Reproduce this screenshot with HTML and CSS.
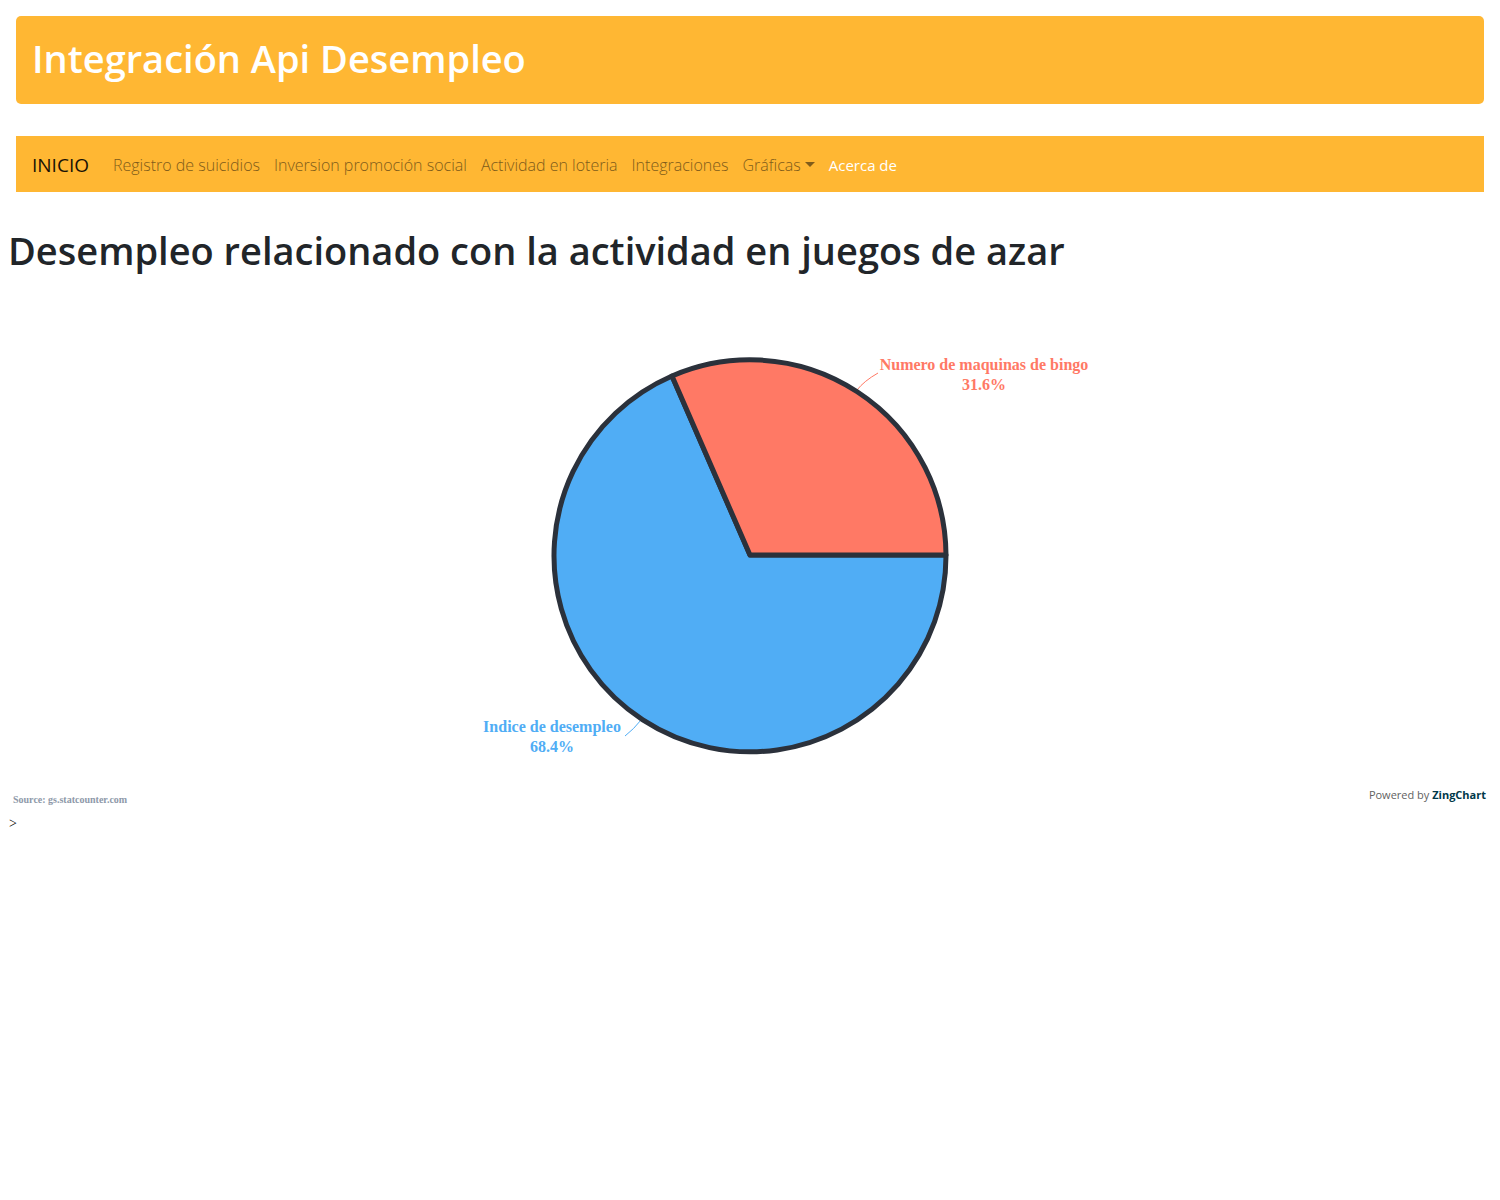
FILE: index.html
```html
<!DOCTYPE html>
<html lang="es">
<head>
<meta charset="utf-8">
<meta name="viewport" content="width=device-width, initial-scale=1">
<title>Integración Api Desempleo</title>
<link rel="stylesheet" href="styles.css">
</head>
<body>
<header class="banner">
  <h1 class="title">Integración Api Desempleo</h1>
</header>
<nav class="navbar">
  <a class="brand" href="#">INICIO</a>
  <ul class="nav-list">
    <li><a class="nav-link" href="#">Registro de suicidios</a></li>
    <li><a class="nav-link" href="#">Inversion promoción social</a></li>
    <li><a class="nav-link" href="#">Actividad en loteria</a></li>
    <li><a class="nav-link" href="#">Integraciones</a></li>
    <li><button class="nav-link dropdown" type="button">Gráficas</button></li>
    <li><a class="nav-link about" href="#">Acerca de</a></li>
  </ul>
</nav>
<main class="content">
  <h2 class="title">Desempleo relacionado con la actividad en juegos de azar</h2>
  <figure class="chart">
    <svg class="pie" viewBox="-40 0 640 488" role="img" aria-label="Desempleo y maquinas de bingo">
      <path class="leader bingo-line" d="M387 90Q394 81 408 73"/>
      <path class="leader unemployment-line" d="M171 420Q164 429 155 436"/>
      <g class="slices">
        <path class="unemployment" d="M280 255H476A196 196 0 1 1 202 76Z"/>
        <path class="bingo" d="M280 255L202 76A196 196 0 0 1 476 255Z"/>
      </g>
      <text class="label bingo" x="514" y="70">Numero de maquinas de bingo</text>
      <text class="label bingo" x="514" y="90">31.6%</text>
      <text class="label unemployment" x="82" y="432">Indice de desempleo</text>
      <text class="label unemployment" x="82" y="452">68.4%</text>
    </svg>
    <figcaption class="credits">
      <span class="source">Source: gs.statcounter.com</span>
      <a class="powered" href="#">Powered by <strong>ZingChart</strong></a>
    </figcaption>
  </figure>
  <p class="trailing">&gt;</p>
</main>
</body>
</html>
```

FILE: styles.css
```css
* { box-sizing: border-box; }
body {
  margin: 0;
  background: #fff;
  color: #212529;
  font: 16px/24px "Open Sans", sans-serif;
}
.banner {
  margin: 16px 16px 32px;
  padding: 16px 16px 20px;
  border-radius: 5px;
  background: #ffb733;
  color: #fff;
}
.title {
  margin: 0;
  font-size: 38px;
  font-weight: 600;
  line-height: 52px;
}
.navbar {
  display: flex;
  align-items: center;
  gap: 17px;
  min-height: 56px;
  margin: 0 16px;
  padding: 9px 16px 7px;
  background: #ffb733;
  font-weight: 300;
}
.brand {
  color: #1a1205;
  font-size: 19px;
  font-weight: 400;
  text-decoration: none;
}
.nav-list {
  display: flex;
  margin: 0;
  padding: 0;
  list-style: none;
}
.nav-link {
  display: block;
  padding: 8px 7px;
  border: 0;
  background: none;
  color: #805c1a;
  font: inherit;
  text-decoration: none;
  white-space: nowrap;
}
.dropdown::after {
  content: "";
  display: inline-block;
  margin-left: 4px;
  border: 5px solid transparent;
  border-top-color: currentColor;
  border-bottom: 0;
  vertical-align: 4px;
}
.about {
  color: #fff;
  font-size: 15px;
  font-weight: 400;
}
.content { padding: 32px 8px; }
.chart { margin: 24px 0 0; }
.pie {
  display: block;
  width: 640px;
  max-width: 100%;
  margin: 0 auto;
  overflow: visible;
}
.slices { stroke: #2b313b; stroke-width: 5; stroke-linejoin: round; }
.bingo { fill: #ff7965; }
.unemployment { fill: #50adf5; }
.leader { fill: none; stroke-width: 1; }
.bingo-line { stroke: #ff7965; }
.unemployment-line { stroke: #50adf5; }
.label {
  font: bold 16px "Liberation Serif", serif;
  text-anchor: middle;
}
.credits {
  display: flex;
  align-items: flex-start;
  justify-content: space-between;
  padding: 0 6px 0 5px;
}
.source {
  color: #8e99a9;
  font: bold 10px/24px "Liberation Serif", serif;
}
.powered {
  color: #626262;
  font-size: 11px;
  line-height: 14px;
  text-decoration: none;
}
.powered strong { color: #003849; }
.trailing {
  margin: 0;
  padding-left: 1px;
  color: #000;
  font: 14px/24px "Liberation Serif", serif;
}
```
